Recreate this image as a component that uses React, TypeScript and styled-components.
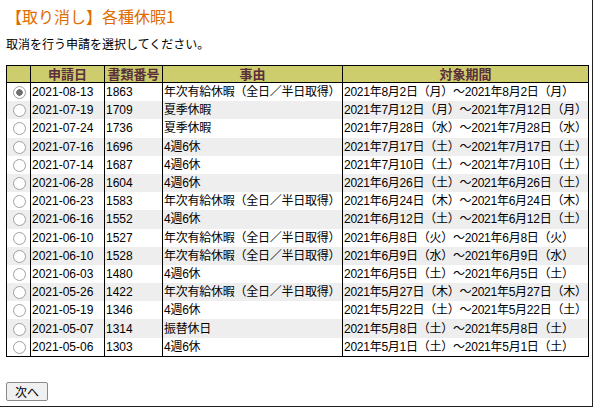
import React, { useState } from "react";
import styled, { createGlobalStyle } from "styled-components";

const GlobalStyle = createGlobalStyle`
  html, body {
    margin: 0;
    padding: 0;
    background: #fff;
  }
  body {
    font-family: "Noto Sans CJK JP", "Noto Sans", sans-serif;
    font-size: 12px;
    color: #000;
  }
`;

const rows = [
  ["2021-08-13", "1863", "年次有給休暇（全日／半日取得）", "2021年8月2日（月）～2021年8月2日（月）"],
  ["2021-07-19", "1709", "夏季休暇", "2021年7月12日（月）～2021年7月12日（月）"],
  ["2021-07-24", "1736", "夏季休暇", "2021年7月28日（水）～2021年7月28日（水）"],
  ["2021-07-16", "1696", "4週6休", "2021年7月17日（土）～2021年7月17日（土）"],
  ["2021-07-14", "1687", "4週6休", "2021年7月10日（土）～2021年7月10日（土）"],
  ["2021-06-28", "1604", "4週6休", "2021年6月26日（土）～2021年6月26日（土）"],
  ["2021-06-23", "1583", "年次有給休暇（全日／半日取得）", "2021年6月24日（木）～2021年6月24日（木）"],
  ["2021-06-16", "1552", "4週6休", "2021年6月12日（土）～2021年6月12日（土）"],
  ["2021-06-10", "1527", "年次有給休暇（全日／半日取得）", "2021年6月8日（火）～2021年6月8日（火）"],
  ["2021-06-10", "1528", "年次有給休暇（全日／半日取得）", "2021年6月9日（水）～2021年6月9日（水）"],
  ["2021-06-03", "1480", "4週6休", "2021年6月5日（土）～2021年6月5日（土）"],
  ["2021-05-26", "1422", "年次有給休暇（全日／半日取得）", "2021年5月27日（木）～2021年5月27日（木）"],
  ["2021-05-19", "1346", "4週6休", "2021年5月22日（土）～2021年5月22日（土）"],
  ["2021-05-07", "1314", "振替休日", "2021年5月8日（土）～2021年5月8日（土）"],
  ["2021-05-06", "1303", "4週6休", "2021年5月1日（土）～2021年5月1日（土）"],
];

export default function App() {
  const [selected, setSelected] = useState(0);

  return (
    <Frame>
      <GlobalStyle />
      <Title>【取り消し】各種休暇1</Title>
      <Lead>取消を行う申請を選択してください。</Lead>
      <Table>
        <colgroup>
          <col style={{ width: 24 }} />
          <col style={{ width: 74 }} />
          <col style={{ width: 58 }} />
          <col style={{ width: 180 }} />
          <col />
        </colgroup>
        <thead>
          <tr>
            <Th />
            <Th>申請日</Th>
            <Th>書類番号</Th>
            <Th>事由</Th>
            <Th>対象期間</Th>
          </tr>
        </thead>
        <tbody>
          {rows.map((r, i) => (
            <Row key={i} $alt={i % 2 === 1}>
              <RadioCell>
                <Radio
                  type="radio"
                  name="req"
                  checked={selected === i}
                  onChange={() => setSelected(i)}
                />
              </RadioCell>
              <Td>{r[0]}</Td>
              <Td>{r[1]}</Td>
              <Td $tight>{r[2]}</Td>
              <Td $tight>{r[3]}</Td>
            </Row>
          ))}
        </tbody>
      </Table>
      <Footer>
        <NextButton type="button">次へ</NextButton>
      </Footer>
    </Frame>
  );
}

const Frame = styled.div`
  box-sizing: border-box;
  width: 593px;
  height: 407px;
  padding: 0 3px 0 6px;
  border-right: 1px solid #222;
  border-bottom: 1px solid #222;
  display: flex;
  flex-direction: column;
`;

const Title = styled.h1`
  margin: 5px 0 0;
  font-size: 16px;
  line-height: 22px;
  font-weight: normal;
  color: #e06c00;
`;

const Lead = styled.p`
  margin: 9px 0 0;
  font-size: 12px;
  line-height: 16px;
`;

const Table = styled.table`
  margin-top: 13px;
  width: 583px;
  border-collapse: collapse;
  border: 1px solid #000;
  table-layout: fixed;
  font-family: "Liberation Sans", "Noto Sans CJK JP", sans-serif;
  font-size: 12px;
`;

const Th = styled.th`
  background: #cdcd6e;
  color: #5a2e3a;
  font-family: "Noto Sans CJK JP", sans-serif;
  font-size: 13px;
  font-weight: bold;
  height: 16px;
  line-height: 16px;
  padding: 0;
  border: 1px solid #000;
  text-align: center;
  white-space: nowrap;
`;

const Row = styled.tr<{ $alt: boolean }>`
  background: ${(p) => (p.$alt ? "#eeeeee" : "#ffffff")};
`;

const Td = styled.td<{ $tight?: boolean }>`
  height: 18.2px;
  line-height: 18px;
  padding: 0 0 0 1px;
  border-left: 1px solid #000;
  border-right: 1px solid #000;
  white-space: nowrap;
  letter-spacing: ${(p) => (p.$tight ? "-0.25px" : "0")};
`;

const RadioCell = styled(Td)`
  padding: 0;
  text-align: center;
`;

const Radio = styled.input`
  appearance: none;
  box-sizing: border-box;
  width: 13px;
  height: 13px;
  margin: 3px 0 0 1px;
  vertical-align: top;
  border: 1px solid #a0a0a0;
  border-radius: 50%;
  background: #fff;
  &:checked {
    background: radial-gradient(circle, #707070 0 3px, #fff 3.5px);
  }
`;

const Footer = styled.div`
  margin-top: auto;
  margin-bottom: 5px;
`;

const NextButton = styled.button`
  font-family: "Noto Sans CJK JP", sans-serif;
  font-size: 12px;
  line-height: 14px;
  height: 19px;
  padding: 0 8px;
  background: #f0f0f0;
  border: 1px solid #8a8a8a;
  border-radius: 2px;
  color: #000;
`;
